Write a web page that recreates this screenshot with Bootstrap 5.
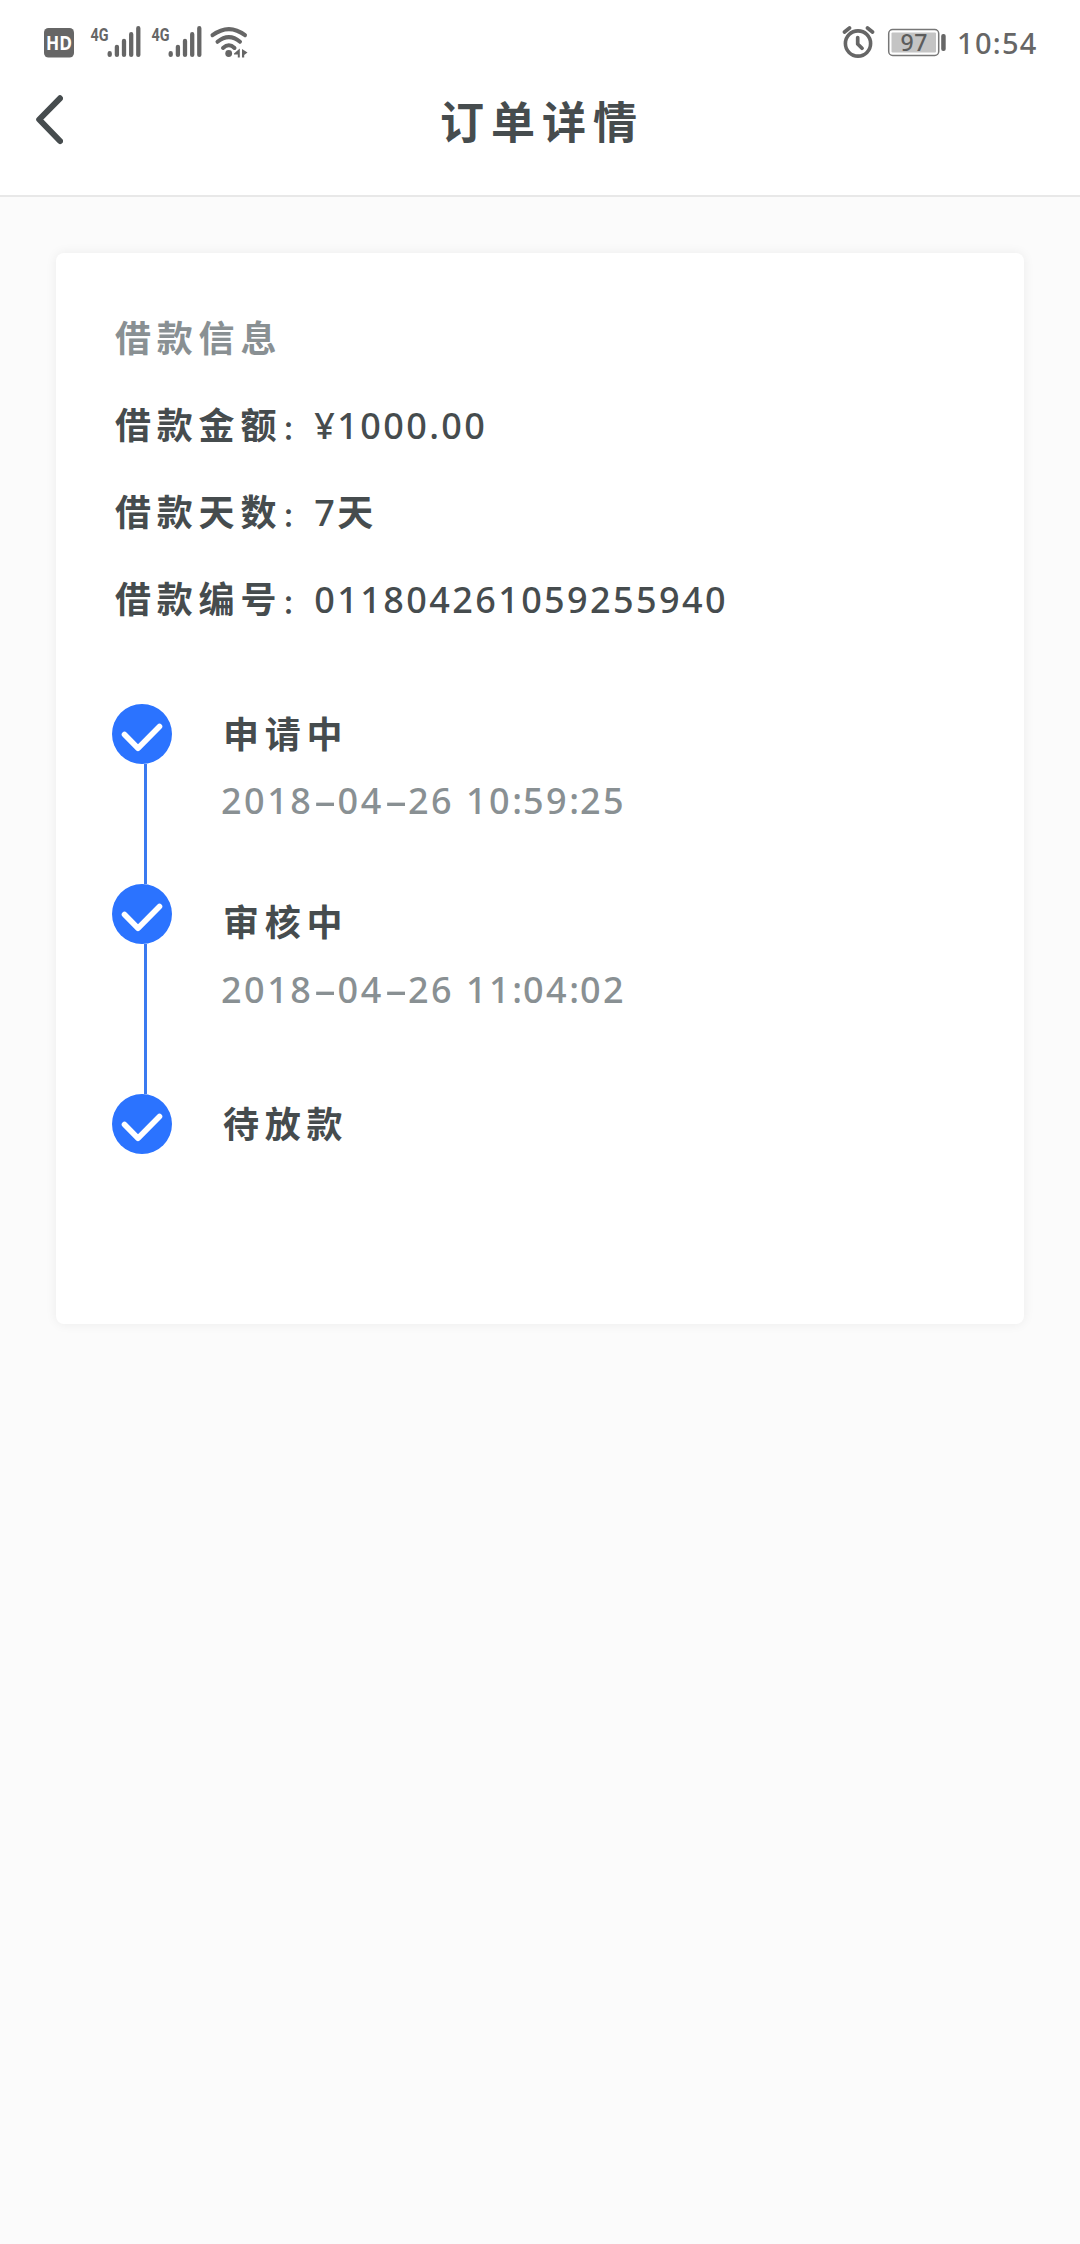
<!DOCTYPE html>
<html lang="zh-CN">
<head>
<meta charset="utf-8">
<meta name="viewport" content="width=device-width, initial-scale=1">
<title>订单详情</title>
<link href="https://cdn.jsdelivr.net/npm/bootstrap@5.3.0/dist/css/bootstrap.min.css" rel="stylesheet">
<style>
body{background:#fbfbfb;color:#464c4e;font-family:"Noto Sans","Noto Sans CJK SC",sans-serif;font-size:36px;line-height:1;min-height:2244px}
.cjk{font-family:"Noto Sans CJK SC",sans-serif;font-weight:700;font-size:36px;letter-spacing:5.8px;white-space:nowrap}
.num{font-weight:500;font-size:36px;letter-spacing:2.4px;white-space:nowrap}
.app-head{height:197px;border-bottom:2px solid #e8e8e8}
.status-bar{height:84px;padding:0 44px}
.status-bar svg{height:84px}
.clock{font-size:29px;font-weight:500;letter-spacing:1.3px;color:#666;width:79px;white-space:nowrap;margin-left:11px}
.title-bar{height:72px;padding-left:36px}
.title-bar h1{font-size:44px;letter-spacing:7px;text-indent:7px;margin:0 0 0 -66px}
.back-btn{width:27px;height:72px;line-height:0}
.order-card{margin:56px 56px 0;height:1071px;border:0;border-radius:8px;box-shadow:0 0 12px rgba(0,0,0,.065);padding:41px 56px 0;background:#fff}
.info-row{height:87px;padding-left:3px}
.info-row.cjk,.info-row .cjk{padding-bottom:3px}
.info-row .num{padding-top:2px}
.soft{color:#899093}
.sep{width:32px;display:inline-block;letter-spacing:0;font-weight:700;font-size:25px}
.timeline{padding-top:62px}
.step-row{gap:48px}
.rail{width:60px}
.dot{width:60px;height:60px;flex:none;display:block}
.line{width:3px;background:#3b7af0;margin-left:32px}
.step-name{height:60px;padding:0 0 4px 3px}
.first{height:180px}.second{height:210px}
.second .step-name{height:76px}
.stamp{height:74px;padding-left:1px;letter-spacing:2.5px}
.second .stamp{height:60px}
.dash{display:inline-block;width:24.2px;letter-spacing:0;text-align:center;transform:scaleX(2)}
.cl{letter-spacing:1px}
</style>
<script src="https://cdn.jsdelivr.net/npm/bootstrap@5.3.0/dist/js/bootstrap.bundle.min.js"></script>
</head>
<body>
<header class="app-head bg-white">
  <div class="status-bar d-flex align-items-center justify-content-between">
    <svg width="206" viewBox="44 0 206 84" fill="#666" aria-hidden="true">
      <rect x="44" y="28" width="30" height="29.500" rx="4.500"/>
      <text x="59" y="49.800" font-family="Open Sans" font-size="19" font-weight="700" fill="#fff" text-anchor="middle" textLength="26" lengthAdjust="spacingAndGlyphs">HD</text>
      <g id="sig">
        <text x="90.500" y="40.500" font-family="Roboto" font-size="19" font-weight="700" textLength="18" lengthAdjust="spacingAndGlyphs">4G</text>
        <path d="M109.700 53.200v1.700M116.900 46.800v8.100M124 41v13.900M131.200 34.200v20.700M138.300 28.200v26.700" stroke="#666" stroke-width="4.300" stroke-linecap="round"/>
      </g>
      <use href="#sig" x="61"/>
      <g fill="none" stroke="#666" stroke-width="4" stroke-linecap="round">
        <path d="M212.500 35.200Q229 23 245 35.200M217.500 41.800Q229 32.500 240 41.800M223 48Q229 42.500 234.500 48"/>
      </g>
      <circle cx="228.700" cy="53.500" r="3.400"/>
      <path d="M234 53.500 239.800 48.500v9h-2v-3h-3.800zM242 49l5.500 3.500-3.300 2.500V57.500H242z"/>
    </svg>
    <div class="d-flex align-items-center">
      <svg width="104" viewBox="842 0 104 84" fill="none" aria-hidden="true">
        <circle cx="858" cy="43.500" r="12.600" stroke="#666" stroke-width="3.600"/>
        <path d="M857.700 37.500v6.500l4.300 4.300M844.500 32l5-4M867.500 28l5 4" stroke="#666" stroke-width="3.700" stroke-linecap="round" stroke-linejoin="round"/>
        <rect x="888.700" y="29.500" width="50" height="26" rx="4" stroke="#777" stroke-width="1.500"/>
        <rect x="891.500" y="32.500" width="44.500" height="20" rx="1" fill="#c4c4c4"/>
        <text x="914" y="50.500" font-family="Noto Sans" font-size="23" font-weight="500" fill="#5c5c5c" text-anchor="middle" textLength="27">97</text>
        <rect x="941.200" y="34" width="4.500" height="17" rx="2" fill="#666"/>
      </svg>
      <span class="clock">10:54</span>
    </div>
  </div>
  <nav class="title-bar d-flex align-items-center">
    <a href="#" class="back-btn d-flex align-items-center" aria-label="返回"><svg width="27" height="50" viewBox="0 0 27 50" fill="none" stroke="#464c4e" stroke-width="6" stroke-linecap="round" stroke-linejoin="round"><path d="M24 3.300 3.200 24.500 24 46"/></svg></a>
    <h1 class="cjk flex-grow-1 text-center">订单详情</h1>
  </nav>
</header>
<main class="card order-card">
  <div class="info-row cjk soft d-flex align-items-center">借款信息</div>
  <div class="info-row d-flex align-items-center"><span class="cjk">借款金额<span class="sep">：</span></span><span class="num">¥1000.00</span></div>
  <div class="info-row d-flex align-items-center"><span class="cjk">借款天数<span class="sep">：</span></span><span class="num">7</span><span class="cjk">天</span></div>
  <div class="info-row d-flex align-items-center"><span class="cjk">借款编号<span class="sep">：</span></span><span class="num">011804261059255940</span></div>
  <section class="timeline">
    <div class="step-row first d-flex">
      <div class="rail d-flex flex-column"><svg class="dot" viewBox="0 0 60 60"><circle cx="30" cy="30" r="30" fill="#2b73ff"/><path d="M12.500 30.500 26 44.300 47.500 22.500" fill="none" stroke="#fff" stroke-width="5.600" stroke-linecap="round" stroke-linejoin="round"/></svg><div class="line flex-grow-1"></div></div>
      <div><div class="step-name cjk d-flex align-items-center">申请中</div><div class="stamp num soft d-flex align-items-center"><span>2018<span class="dash">-</span>04<span class="dash">-</span>26 10<span class="cl">:</span>59<span class="cl">:</span>25</span></div></div>
    </div>
    <div class="step-row second d-flex">
      <div class="rail d-flex flex-column"><svg class="dot" viewBox="0 0 60 60"><circle cx="30" cy="30" r="30" fill="#2b73ff"/><path d="M12.500 30.500 26 44.300 47.500 22.500" fill="none" stroke="#fff" stroke-width="5.600" stroke-linecap="round" stroke-linejoin="round"/></svg><div class="line flex-grow-1"></div></div>
      <div><div class="step-name cjk d-flex align-items-center">审核中</div><div class="stamp num soft d-flex align-items-center"><span>2018<span class="dash">-</span>04<span class="dash">-</span>26 11<span class="cl">:</span>04<span class="cl">:</span>02</span></div></div>
    </div>
    <div class="step-row d-flex">
      <div class="rail"><svg class="dot" viewBox="0 0 60 60"><circle cx="30" cy="30" r="30" fill="#2b73ff"/><path d="M12.500 30.500 26 44.300 47.500 22.500" fill="none" stroke="#fff" stroke-width="5.600" stroke-linecap="round" stroke-linejoin="round"/></svg></div>
      <div class="step-name cjk d-flex align-items-center">待放款</div>
    </div>
  </section>
</main>
</body>
</html>
